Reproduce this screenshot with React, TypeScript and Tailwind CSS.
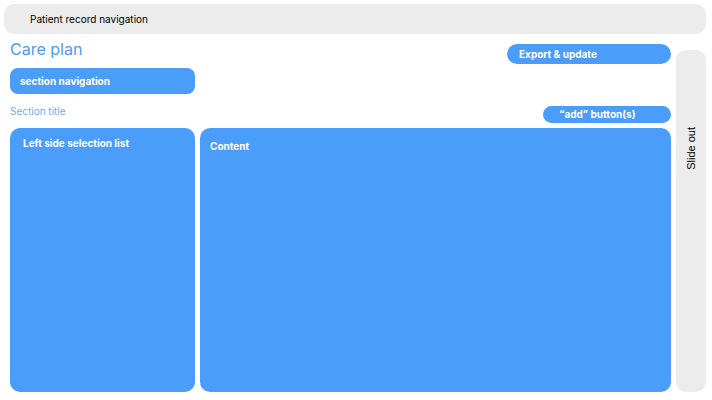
export default function App() {
  return (
    <div className="w-[712px] h-[400px] bg-white p-1 flex flex-col font-['Inter',sans-serif] overflow-hidden">
      {/* Patient record navigation */}
      <div className="h-[30px] w-[702px] shrink-0 rounded-[10px] bg-[#ececec] pl-[26px] flex items-center text-[10px] text-black">
        Patient record navigation
      </div>

      <div className="flex flex-1 min-h-0">
        {/* Main column */}
        <div className="ml-[6px] w-[661px] flex flex-col">
          <div className="flex items-start justify-between mt-[6px]">
            <h1 className="text-[16px] leading-[19px] text-[#4a9df8]">Care plan</h1>
            <button className="mt-[4px] h-[20px] w-[164px] rounded-full bg-[#4a9df8] pl-[12px] text-left text-[10px] font-bold text-white">
              Export &amp; update
            </button>
          </div>

          <div className="mt-[4px] h-[26px] w-[185px] rounded-[8px] bg-[#4a9df8] pl-[10px] flex items-center text-[10px] font-bold text-white">
            section navigation
          </div>

          <div className="mt-[12px] flex items-start justify-between">
            <span className="text-[10px] leading-[10px] text-[#6aaef8]">Section title</span>
            <button className="h-[17px] w-[128px] rounded-full bg-[#4a9df8] pl-[16px] text-left text-[10px] font-bold text-white">
              “add” button(s)
            </button>
          </div>

          <div className="mt-[5px] mb-[4px] flex flex-1 gap-[5px]">
            <div className="w-[185px] rounded-[10px] bg-[#4a9df8] pl-[13px] pt-[8px] text-[10px] font-bold text-white">
              Left side selection list
            </div>
            <div className="flex-1 rounded-[10px] bg-[#4a9df8] pl-[10px] pt-[11px] text-[10px] font-bold text-white">
              Content
            </div>
          </div>
        </div>

        {/* Slide out */}
        <div className="ml-[5px] mt-[16px] mb-[4px] w-[30px] rounded-[10px] bg-[#ececec] flex justify-center pt-[77px]">
          <span className="[writing-mode:vertical-rl] rotate-180 font-['Liberation_Sans',sans-serif] text-[11px] leading-[12px] text-black h-fit">
            Slide out
          </span>
        </div>
      </div>
    </div>
  );
}
